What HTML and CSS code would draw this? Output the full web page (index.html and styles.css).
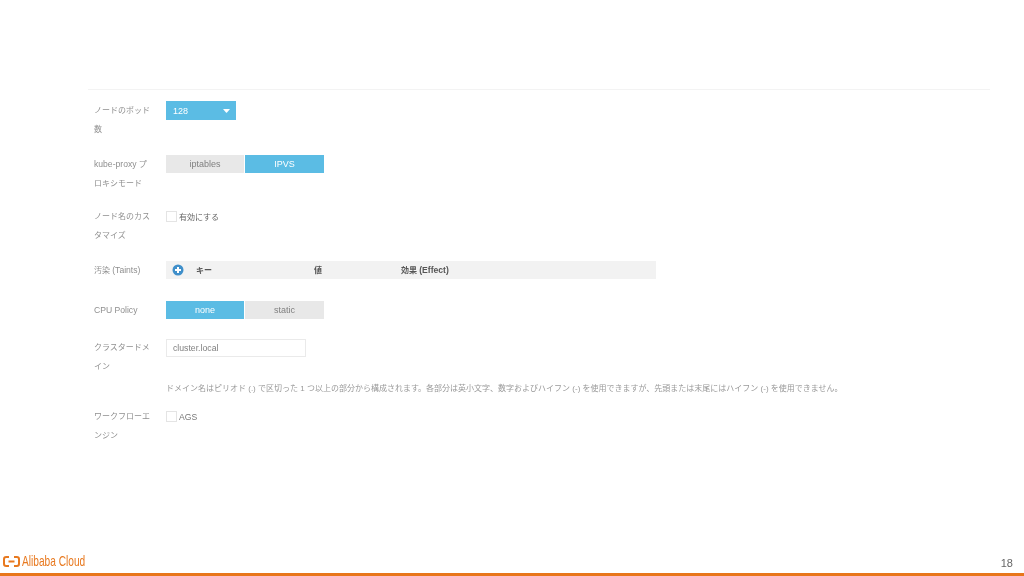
FILE: index.html
```html
<!DOCTYPE html>
<html lang="ja">
<head>
<meta charset="utf-8">
<title>Alibaba Cloud</title>
<link rel="stylesheet" href="styles.css">
</head>
<body>
<div class="slide">
  <main class="form">
    <div class="row row-first">
      <div class="label">ノードのポッド数</div>
      <div class="control">
        <div class="select"><span>128</span><svg class="caret" width="7" height="4" viewBox="0 0 7 4"><path d="M0 0h7L4 3.6q-.5.4-1 0z" fill="#fff"/></svg></div>
      </div>
    </div>
    <div class="row row-two">
      <div class="label"><span class="en">kube-proxy</span> プ<br>ロキシモード</div>
      <div class="control">
        <div class="toggle"><span class="opt">iptables</span><span class="opt on">IPVS</span></div>
      </div>
    </div>
    <div class="row row-two">
      <div class="label">ノード名のカスタマイズ</div>
      <div class="control">
        <label class="check dark"><span class="box"></span>有効にする</label>
      </div>
    </div>
    <div class="row row-taint">
      <div class="label">汚染 <span class="en">(Taints)</span></div>
      <div class="control">
        <div class="taints">
          <svg class="plus" width="12" height="12" viewBox="0 0 12 12"><circle cx="6" cy="6" r="5.5" fill="#3f8fca"/><path d="M6 3v6M3 6h6" stroke="#fff" stroke-width="2"/></svg>
          <span class="col col-key">キー</span>
          <span class="col col-val">値</span>
          <span class="col">効果 <span class="en">(Effect)</span></span>
        </div>
      </div>
    </div>
    <div class="row row-cpu">
      <div class="label"><span class="en">CPU Policy</span></div>
      <div class="control">
        <div class="toggle"><span class="opt on">none</span><span class="opt">static</span></div>
      </div>
    </div>
    <div class="row row-domain">
      <div class="label">クラスタードメイン</div>
      <div class="control">
        <div class="input">cluster.local</div>
        <p class="help">ドメイン名はピリオド (.) で区切った 1 つ以上の部分から構成されます。各部分は英小文字、数字およびハイフン (-) を使用できますが、先頭または末尾にはハイフン (-) を使用できません。</p>
      </div>
    </div>
    <div class="row row-two">
      <div class="label">ワークフローエンジン</div>
      <div class="control">
        <label class="check"><span class="box"></span><span class="en">AGS</span></label>
      </div>
    </div>
  </main>
  <footer class="footer">
    <div class="logo">
      <svg width="17" height="11" viewBox="0 0 17 11"><path d="M6 1H3.2Q1 1 1 3.2v4.6Q1 10 3.2 10H6M11 1h2.8Q16 1 16 3.2v4.6Q16 10 13.8 10H11M5.5 5.5h6" fill="none" stroke="#e8791f" stroke-width="2"/></svg>
      <span class="logo-text">Alibaba Cloud</span>
    </div>
    <span class="page">18</span>
  </footer>
  <div class="bar"></div>
</div>
</body>
</html>
```
FILE: styles.css
```css
* { box-sizing: border-box; }
html, body { margin: 0; padding: 0; }
body {
  background: #fff;
  font-family: "Liberation Sans", "Noto Sans CJK JP", sans-serif;
  color: #8a8a8a;
}
.slide {
  width: 1024px;
  height: 576px;
  display: flex;
  flex-direction: column;
  overflow: hidden;
  filter: blur(0.3px);
}
.form {
  flex: 1;
  margin: 89px 34px 0 88px;
  padding: 11px 0 0 6px;
  border-top: 1px solid #f3f3f3;
}
.row { display: flex; align-items: flex-start; }
.row-first { height: 54px; }
.row-two { height: 53px; }
.row-taint { height: 40px; }
.row-cpu { height: 38px; }
.row-domain { height: 69px; }
.label {
  width: 72px;
  padding: 0 14px 0 0;
  font-size: 8px;
  line-height: 18.5px;
  color: #8f8f8f;
}
.row-first .label { padding-top: 1px; }
.en { font-size: 8.6px; }
.control { flex: 1; min-width: 0; }
.select {
  width: 70px;
  height: 19px;
  padding: 0 6px 0 7px;
  background: #5bbce4;
  color: #fff;
  font-size: 9px;
  display: flex;
  align-items: center;
  justify-content: space-between;
}
.toggle { display: flex; gap: 1px; }
.opt {
  width: 79px;
  height: 18px;
  background: #e8e8e8;
  color: #808080;
  font-size: 9px;
  line-height: 18px;
  text-align: center;
}
.opt:first-child { width: 78px; }
.opt.on { background: #5bbce4; color: #fff; }
.check {
  display: flex;
  align-items: center;
  gap: 2px;
  height: 17px;
  font-size: 8px;
  color: #777;
}
.check.dark { color: #666; }
.box {
  width: 11px;
  height: 11px;
  background: #fff;
  border: 1px solid #e4e4e4;
}
.taints {
  display: flex;
  align-items: center;
  width: 490px;
  height: 18px;
  padding-left: 6px;
  background: #f2f2f2;
  color: #555;
  font-size: 8px;
  font-weight: 700;
}
.plus { margin-right: 12px; }
.col { padding-bottom: 1px; }
.col-key { width: 118px; }
.col-val { width: 87px; }
.input {
  width: 140px;
  height: 18px;
  padding-left: 6px;
  border: 1px solid #eaeaea;
  font-size: 8.7px;
  line-height: 17px;
  color: #808080;
}
.help {
  margin: 26px 0 0;
  font-size: 8px;
  line-height: 12px;
  white-space: nowrap;
  color: #999;
}
.footer {
  display: flex;
  align-items: center;
  justify-content: space-between;
  height: 20px;
  padding: 0 11px 0 3px;
}
.logo { display: flex; align-items: center; gap: 2px; padding-bottom: 4px; }
.logo-text {
  font-size: 14.5px;
  color: #e8791f;
  transform: scaleX(0.7);
  transform-origin: left center;
}
.page { font-size: 11px; color: #666; }
.bar { height: 3px; background: #e8761a; }
```
